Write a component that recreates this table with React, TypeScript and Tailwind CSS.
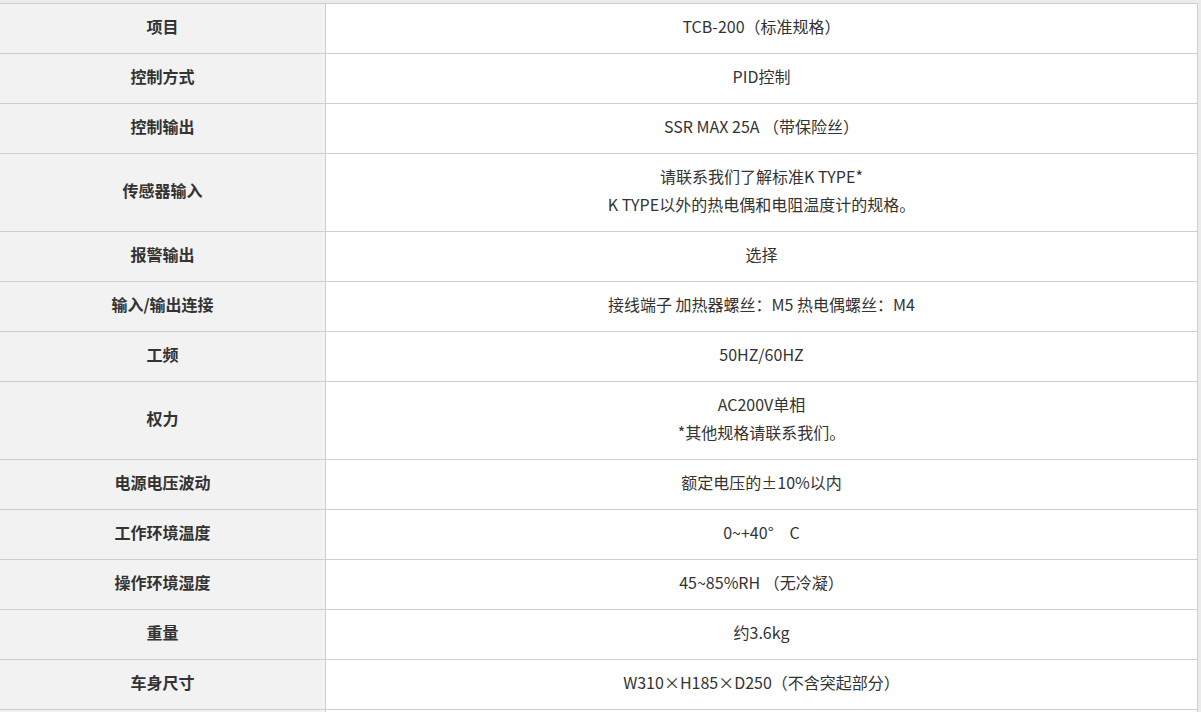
import React from 'react';

const rows: { label: string; value: string[] }[] = [
  { label: '项目', value: ['TCB-200（标准规格）'] },
  { label: '控制方式', value: ['PID控制'] },
  { label: '控制输出', value: ['SSR MAX 25A （带保险丝）'] },
  { label: '传感器输入', value: ['请联系我们了解标准K TYPE*', 'K TYPE以外的热电偶和电阻温度计的规格。'] },
  { label: '报警输出', value: ['选择'] },
  { label: '输入/输出连接', value: ['接线端子 加热器螺丝：M5 热电偶螺丝：M4'] },
  { label: '工频', value: ['50HZ/60HZ'] },
  { label: '权力', value: ['AC200V单相', '*其他规格请联系我们。'] },
  { label: '电源电压波动', value: ['额定电压的±10%以内'] },
  { label: '工作环境温度', value: ['0~+40°\u3000C'] },
  { label: '操作环境湿度', value: ['45~85%RH （无冷凝）'] },
  { label: '重量', value: ['约3.6kg'] },
  { label: '车身尺寸', value: ['W310×H185×D250（不含突起部分）'] },
];

export default function App() {
  return (
    <div
      className="min-h-[712px] bg-[#ebebeb] pt-[3px] pr-[3px] text-[16px] text-[#333]"
      style={{ fontFamily: '"Noto Sans CJK SC", sans-serif' }}
    >
      <div className="w-[1198px] bg-white border-t border-r border-[#cfcfcf]">
        {rows.map((row) => (
          <div key={row.label} className="flex border-b border-[#cfcfcf]">
            <div className="w-[326px] shrink-0 bg-[#f2f2f2] border-r border-[#cfcfcf] flex items-center justify-center font-bold leading-[28px] pt-[8px] pb-[13px]">
              {row.label}
            </div>
            <div className="flex-1 text-center leading-[28px] pt-[8px] pb-[13px]">
              {row.value.map((line) => (
                <div key={line}>{line}</div>
              ))}
            </div>
          </div>
        ))}
        <div className="flex">
          <div className="w-[326px] h-[20px] bg-[#f2f2f2] border-r border-[#cfcfcf]" />
          <div className="flex-1" />
        </div>
      </div>
    </div>
  );
}
